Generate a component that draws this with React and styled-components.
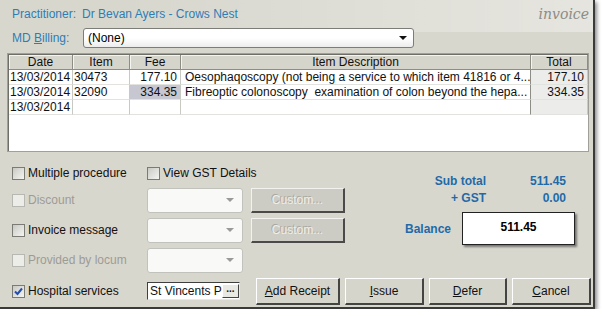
import React from 'react';
import styled, { createGlobalStyle } from 'styled-components';

const GlobalStyle = createGlobalStyle`
  body {
    margin: 0;
    background: #ffffff;
    font-family: "Liberation Sans", Arial, sans-serif;
    font-size: 12px;
    color: #111;
  }
`;

const Window = styled.div`
  width: 595px;
  height: 309px;
  box-sizing: border-box;
  background-color: #d8d7ce;
  background-image: linear-gradient(to right, rgba(255,255,255,0) 20%, rgba(255,255,255,0.35));
  background-size: 100% 32px;
  background-repeat: no-repeat;
  border-right: 2px solid #3a3a3a;
  border-bottom: 2px solid #3a3a3a;
  box-shadow: 2px 2px 4px rgba(0,0,0,0.45);
  display: flex;
  flex-direction: column;
  padding-top: 6px;
`;

const TopRow = styled.div`
  display: flex;
  align-items: center;
  height: 16px;
  padding: 0 4px 0 12px;
  color: #2f7db5;
`;

const PractLabel = styled.span`
  width: 70px;
`;

const Invoice = styled.span`
  margin-left: auto;
  font-family: "DejaVu Serif", "Liberation Serif", serif;
  font-style: italic;
  font-weight: normal;
  font-size: 14px;
  color: #8c8c88;
`;

const BillingRow = styled.div`
  display: flex;
  align-items: center;
  margin-top: 6px;
  padding-left: 12px;
  color: #2f7db5;
`;

const BillingLabel = styled.span`
  width: 71px;
`;

const Select = styled.div`
  width: 331px;
  height: 20px;
  box-sizing: border-box;
  border: 1px solid #7d7d78;
  border-radius: 3px;
  background: linear-gradient(#ffffff, #ffffff 50%, #ececec);
  display: flex;
  align-items: center;
  padding: 0 6px 0 4px;
  color: #000;
`;

const Arrow = styled.span`
  margin-left: auto;
  width: 0;
  height: 0;
  border-left: 4px solid transparent;
  border-right: 4px solid transparent;
  border-top: 4px solid ${p => (p.$light ? '#9a9a9a' : '#111')};
`;

const Table = styled.div`
  margin: 5px 0 0 7px;
  width: 582px;
  height: 99px;
  box-sizing: border-box;
  border: 1px solid #a0a098;
  box-shadow: inset 1px 1px 0 #6f6f6a;
  background: #fff;
  padding: 1px 0 0 1px;
`;

const cols = '64px 57px 51px 350px 57px';

const Row = styled.div`
  display: grid;
  grid-template-columns: ${cols};
  height: 15px;
`;

const HeadCell = styled.div`
  background: #d6d5cc;
  border-right: 1px solid #8d8d86;
  border-bottom: 1px solid #8d8d86;
  box-shadow: inset 1px 1px 0 #f4f4f0;
  text-align: center;
  line-height: 14px;
  color: #111;
`;

const Cell = styled.div`
  border-right: 1px solid ${p => (p.$strong ? '#8d8d86' : '#c9c9c4')};
  border-bottom: 1px solid #e2e2de;
  background: ${p => (p.$sel ? '#c6c7d1' : p.$total ? '#ececea' : '#fff')};
  text-align: ${p => (p.$num ? 'right' : 'left')};
  padding: 0 ${p => (p.$num ? '3px' : '1px')} 0 ${p => (p.$desc ? '4px' : '1px')};
  line-height: 14px;
  white-space: pre;
  overflow: hidden;
  color: #111;
`;

const Lower = styled.div`
  display: flex;
  padding-top: 11px;
`;

const Options = styled.div`
  width: 333px;
  padding-left: 12px;
  display: flex;
  flex-direction: column;
  gap: 4px;
`;

const OptionRow = styled.div`
  display: flex;
  align-items: center;
  height: ${p => (p.$short ? '20px' : '26px')};
`;

const CheckLabel = styled.label`
  display: flex;
  align-items: center;
  width: ${p => p.$w || '135px'};
  color: ${p => (p.$disabled ? '#9c9c96' : '#111')};
  white-space: nowrap;
`;

const Box = styled.span`
  width: 13px;
  height: 13px;
  box-sizing: border-box;
  border: 1px solid ${p => (p.$disabled ? '#b8b8b2' : '#7b7b76')};
  background: ${p => (p.$disabled ? '#ecece8' : 'linear-gradient(135deg, #c9c9c4, #f4f4f2)')};
  margin-right: 3px;
  display: flex;
  align-items: center;
  justify-content: center;
`;

const Combo = styled.div`
  width: 96px;
  height: 25px;
  box-sizing: border-box;
  border: 1px solid #c2c2bc;
  border-radius: 3px;
  background: #f9f9f8;
  display: flex;
  align-items: center;
  padding-right: 8px;
`;

const CustomButton = styled.div`
  margin-left: 8px;
  width: 94px;
  height: 25px;
  box-sizing: border-box;
  background: #cdccc4;
  border-top: 1px solid #f2f2ee;
  border-left: 1px solid #f2f2ee;
  border-right: 2px solid #4a4a48;
  border-bottom: 2px solid #4a4a48;
  color: #eeeeea;
  text-shadow: -1px -1px 0 #a8a8a2;
  display: flex;
  align-items: center;
  justify-content: center;
`;

const Summary = styled.div`
  flex: 1;
  padding-top: 9px;
  display: flex;
  flex-direction: column;
`;

const Totals = styled.div`
  display: grid;
  grid-template-columns: 141px 80px;
  grid-auto-rows: 17px;
  align-items: center;
  color: #1f6aa8;
  font-weight: bold;
  text-align: right;
`;

const BalanceRow = styled.div`
  display: flex;
  align-items: center;
  margin-top: 6px;
  padding-left: 60px;
`;

const BalanceLabel = styled.span`
  width: 57px;
  color: #1f6aa8;
  font-weight: bold;
`;

const BalanceBox = styled.div`
  width: 113px;
  height: 33px;
  box-sizing: border-box;
  background: #fff;
  border: 1px solid #222;
  box-shadow: 2px 2px 2px rgba(0,0,0,0.45);
  text-align: center;
  font-weight: bold;
  color: #000;
  padding-top: 7px;
`;

const Footer = styled.div`
  display: flex;
  align-items: center;
  margin-top: 4px;
  padding-left: 12px;
  height: 28px;
`;

const Field = styled.div`
  width: 93px;
  height: 18px;
  box-sizing: border-box;
  background: #fff;
  border-top: 1px solid #404040;
  border-left: 1px solid #404040;
  border-right: 1px solid #e8e8e4;
  border-bottom: 1px solid #e8e8e4;
  display: flex;
  align-items: center;
  padding-left: 2px;
  color: #111;
  white-space: nowrap;
  overflow: hidden;
`;

const DotsButton = styled.span`
  margin-left: auto;
  width: 20px;
  height: 14px;
  box-sizing: border-box;
  background: #e9e9e4;
  border-top: 1px solid #fff;
  border-left: 1px solid #fff;
  border-right: 1px solid #444;
  border-bottom: 1px solid #444;
  font-size: 10px;
  line-height: 8px;
  text-align: center;
  font-weight: bold;
`;

const Buttons = styled.div`
  display: flex;
  gap: 5px;
  margin-left: 16px;
`;

const Button = styled.button`
  width: ${p => p.$w}px;
  height: 27px;
  box-sizing: border-box;
  background: #d6d5cc;
  border-top: 1px solid #ffffff;
  border-left: 1px solid #ffffff;
  border-right: 2px solid #444442;
  border-bottom: 2px solid #444442;
  font-family: "Liberation Sans", Arial, sans-serif;
  font-size: 12px;
  color: #111;
  padding: 0;
  & u { text-decoration: underline; }
`;

function Check({ label, disabled, checked, w }) {
  return (
    <CheckLabel $disabled={disabled} $w={w}>
      <Box $disabled={disabled}>
        {checked && (
          <svg width="9" height="9" viewBox="0 0 9 9">
            <path d="M1 4.5 L3.5 7 L8 1.5" fill="none" stroke="#1f4fb0" strokeWidth="2" />
          </svg>
        )}
      </Box>
      {label}
    </CheckLabel>
  );
}

const rows = [
  { date: '13/03/2014', item: '30473', fee: '177.10', desc: 'Oesophaqoscopy (not being a service to which item 41816 or 4...', total: '177.10' },
  { date: '13/03/2014', item: '32090', fee: '334.35', desc: 'Fibreoptic colonoscopy  examination of colon beyond the hepa...', total: '334.35', sel: true },
  { date: '13/03/2014', item: '', fee: '', desc: '', total: '' },
];

export default function App() {
  return (
    <>
      <GlobalStyle />
      <Window>
        <TopRow>
          <PractLabel>Practitioner:</PractLabel>
          <span>Dr Bevan Ayers - Crows Nest</span>
          <Invoice>invoice</Invoice>
        </TopRow>
        <BillingRow>
          <BillingLabel>MD <u>B</u>illing:</BillingLabel>
          <Select>
            (None)
            <Arrow />
          </Select>
        </BillingRow>
        <Table>
          <Row>
            <HeadCell>Date</HeadCell>
            <HeadCell>Item</HeadCell>
            <HeadCell>Fee</HeadCell>
            <HeadCell>Item Description</HeadCell>
            <HeadCell>Total</HeadCell>
          </Row>
          {rows.map((r, i) => (
            <Row key={i}>
              <Cell>{r.date}</Cell>
              <Cell>{r.item}</Cell>
              <Cell $num $sel={r.sel}>{r.fee}</Cell>
              <Cell $desc $strong>{r.desc}</Cell>
              <Cell $num $total>{r.total}</Cell>
            </Row>
          ))}
        </Table>
        <Lower>
          <Options>
            <OptionRow $short>
              <Check label="Multiple procedure" />
              <Check label="View GST Details" w="150px" />
            </OptionRow>
            <OptionRow>
              <Check label="Discount" disabled />
              <Combo><Arrow $light /></Combo>
              <CustomButton>Custom...</CustomButton>
            </OptionRow>
            <OptionRow>
              <Check label="Invoice message" />
              <Combo><Arrow $light /></Combo>
              <CustomButton>Custom...</CustomButton>
            </OptionRow>
            <OptionRow>
              <Check label="Provided by locum" disabled />
              <Combo><Arrow $light /></Combo>
            </OptionRow>
          </Options>
          <Summary>
            <Totals>
              <span>Sub total</span>
              <span>511.45</span>
              <span>+ GST</span>
              <span>0.00</span>
            </Totals>
            <BalanceRow>
              <BalanceLabel>Balance</BalanceLabel>
              <BalanceBox>511.45</BalanceBox>
            </BalanceRow>
          </Summary>
        </Lower>
        <Footer>
          <Check label="Hospital services" checked />
          <Field>
            St Vincents P
            <DotsButton>...</DotsButton>
          </Field>
          <Buttons>
            <Button $w={84}><u>A</u>dd Receipt</Button>
            <Button $w={79}><u>I</u>ssue</Button>
            <Button $w={78}><u>D</u>efer</Button>
            <Button $w={79}><u>C</u>ancel</Button>
          </Buttons>
        </Footer>
      </Window>
    </>
  );
}
